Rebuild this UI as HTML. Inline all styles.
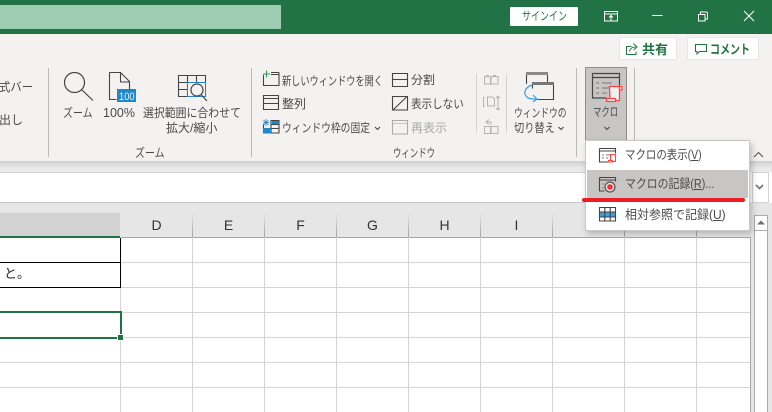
<!DOCTYPE html>
<html lang="ja"><head><meta charset="utf-8"><style>
html,body{margin:0;padding:0;width:772px;height:412px;overflow:hidden;background:#fff}
body{position:relative;font-family:"Liberation Sans","Noto Sans CJK JP",sans-serif;font-size:12px;color:#444}
.a{position:absolute}
.t{position:absolute;white-space:nowrap;line-height:16px;font-size:12px;color:#4a4a4a;transform-origin:0 0}
svg{position:absolute;overflow:visible}
.hd{position:absolute;top:213px;height:24px;line-height:24px;text-align:center;font-size:14px;color:#333;width:71px}
.v{position:absolute;top:237px;width:1px;height:175px;background:#d4d4d4}
.h{position:absolute;left:0;width:750px;height:1px;background:#d4d4d4}
.g{position:absolute;top:213px;width:1px;height:24px;background:linear-gradient(#e6e6e6,#9e9e9e)}
.sep{position:absolute;width:1px;background:#b9b9b9}
</style></head><body>
<div class="a" style="left:0;top:0;width:772px;height:34px;background:#217346"></div>
<div class="a" style="left:0;top:5px;width:281px;height:24px;background:#9fcdb3"></div>
<div class="a" style="left:510px;top:7px;width:68px;height:19px;background:#fff;border-radius:1px"></div>
<div class="t" style="left:522px;top:8px;color:#217346;transform:scaleX(.75)">サインイン</div>
<svg style="left:0;top:0" width="772" height="34" fill="none" stroke="#fff" stroke-width="1">
<path d="M604.500 11.500h13v9.500h-13zM604.500 14h13M611 21v-5M609 17.500l2-2 2 2"/>
<path d="M652 15.500h10.500"/>
<path d="M698.500 14.500h6.500v6.500h-6.500zM700.500 14v-2h5.500a1.500 1.500 0 0 1 1.500 1.500v5.500h-2.500"/>
<path d="M744 11l10 10M754 11l-10 10" stroke-width="1.100"/>
</svg>

<div class="a" style="left:0;top:34px;width:772px;height:127px;background:#f3f2f1"></div>
<div class="a" style="left:0;top:161px;width:772px;height:11px;background:linear-gradient(#cfcfcf,#e8e8e8 60%,#ececec)"></div>
<div class="a" style="left:619px;top:37px;width:58px;height:23px;background:#fff;border:1px solid #e6e6e6;border-radius:2px;box-sizing:border-box"></div>
<div class="a" style="left:687px;top:37px;width:72px;height:23px;background:#fff;border:1px solid #e6e6e6;border-radius:2px;box-sizing:border-box"></div>
<div class="t" style="left:642px;top:42px;color:#217346;font-weight:bold;font-size:13px">共有</div>
<div class="t" style="left:710px;top:42px;color:#217346;font-weight:bold;font-size:13px;transform:scaleX(.77)">コメント</div>
<svg style="left:0;top:0" width="772" height="70" fill="none" stroke="#217346">
<path d="M631.500 46.500h-5v8h9.500v-3M629.500 51.500c.5-3 3-4.500 6-4.500M633.500 43.500l3.500 3.500-3.500 3"/>
<path d="M695.500 44.500h11v7h-7l-2.500 2.500v-2.500h-1.500z"/>
</svg>

<!-- left fragments -->
<div class="t" style="left:-1px;top:79px;transform:scaleX(.95)">式バー</div>
<div class="t" style="left:-1px;top:112px">出し</div>
<div class="sep" style="left:48px;top:68px;height:89px"></div>
<div class="sep" style="left:251px;top:68px;height:89px"></div>
<div class="sep" style="left:476px;top:74px;height:59px;background:#d3d3d3"></div>
<div class="sep" style="left:506px;top:74px;height:59px;background:#d3d3d3"></div>
<div class="sep" style="left:576px;top:68px;height:89px"></div>
<div class="sep" style="left:634px;top:68px;height:89px"></div>

<!-- zoom group -->
<svg style="left:0;top:0" width="260" height="120" fill="none" stroke="#444" stroke-width="1">
<circle cx="74.500" cy="82.500" r="10" stroke-width="1.200"/><path d="M82 90l11 10.500" stroke-width="1.200"/>
<path d="M109.500 72.500h11l9 9v8M120.500 73v9h9M109.500 72.500v27h7" stroke-width="1.100"/>
<rect x="117" y="89" width="19" height="13" fill="#1d88cc" stroke="none"/>
<path d="M178.500 75.500h27v21h-27zM178.500 82.500h27M178.500 89.500h9M187.500 75.500v21M196.500 75.500v7" stroke-width="1.100"/>
<rect x="187.500" y="82.500" width="18" height="14" fill="#f3f2f1" stroke="#1d88cc"/>
<circle cx="197" cy="90" r="6" fill="#f3f2f1" stroke-width="1.200"/><path d="M201 94.500l6 6.500" stroke-width="1.200"/>
</svg>
<div class="t" style="left:119px;top:89px;color:#e6f3fb;font-size:11px;transform:scaleX(.85)">100</div>
<div class="t" style="left:63px;top:105px;transform:scaleX(.83)">ズーム</div>
<div class="t" style="left:103px;top:105px;font-size:12.500px">100%</div>
<div class="t" style="left:143px;top:105px;transform:scaleX(.907)">選択範囲に合わせて</div>
<div class="t" style="left:166px;top:120px">拡大/縮小</div>
<div class="t" style="left:135px;top:145px;transform:scaleX(.83)">ズーム</div>

<!-- window group -->
<svg style="left:0;top:0" width="772" height="170" fill="none" stroke="#444" stroke-width="1">
<path d="M263.500 75v10.500h15.500v-13M271 72.500h8M271 74.500h8" stroke-width="1.100"/><path d="M263 74h7M266.500 70.500v7" stroke="#2a9d4e"/>
<path d="M263.500 95.500h15v14h-15zM263.500 98.500h15M263.500 103.500h15" stroke-width="1.100"/>
<path d="M270.500 120.500h8.500v12.500h-15.500v-9M263.500 128.500h15.500M271 120.500v12.500M271 124.500h8" stroke-width="1.100"/>
<rect x="263" y="128" width="8" height="5.500" fill="#1d88cc" stroke="none"/><rect x="272" y="121" width="7" height="3" fill="#1d88cc" stroke="none"/><path d="M266 119v7M263 122.500h6.500M263.500 120l5 5M268.500 120l-5 5" stroke="#1d88cc" stroke-width=".8"/>
<path d="M392.500 73.500h15v13h-15zM392.500 79.500h15" stroke-width="1.100"/>
<path d="M392.500 96.500h15v13.500h-15zM393 110l14-13.500" stroke-width="1.100"/>
<path d="M392.500 120.500h15v13.500h-15z" stroke="#aaa" stroke-width="1.100"/><path d="M393 123.500h14" stroke="#c8c8c8"/>
<g stroke="#b4b4b4"><path d="M484.500 76.500v7.500h6v-7zM491 76.500h7v7.500h-7zM486 75.500h3M493 75.500h3"/>
<path d="M484.500 97.500h-1v9h1M487.500 97h5l2 2v7h-7zM498 96v14M496 98l2-2 2 2M496 108l2 2 2-2"/>
<path d="M484.500 126.500v7h6v-7zM491 126.500h7v7h-7zM489 119.500l-3 2.500 3 2.500M486 122h5v3"/></g>
<path d="M526.500 84v-11.500h21v10" stroke-width="1.100"/><rect x="526" y="72" width="22" height="3" fill="#8a8a8a" stroke="none"/>
<path d="M532.500 82.500h21v17h-16" stroke-width="1.100"/><path d="M532.500 82.500v6" stroke-width="1.100"/><rect x="532" y="82" width="22" height="3" fill="#777" stroke="none"/>
<path d="M532 85c-6 2-9 7-6 11 2 3 6 3 10 3M533 95l4 4-4 3" stroke="#3d9fdc" stroke-width="1.200"/>
<path d="M375 127l2.500 2.500 2.500-2.500M558.500 127l2.500 2.500 2.500-2.500" stroke-width="1"/>
</svg>
<div class="t" style="left:282px;top:73px;transform:scaleX(.765)">新しいウィンドウを開く</div>
<div class="t" style="left:282px;top:96px">整列</div>
<div class="t" style="left:282px;top:120px;transform:scaleX(.815)">ウィンドウ枠の固定</div>
<div class="t" style="left:411px;top:72px">分割</div>
<div class="t" style="left:411px;top:96px;transform:scaleX(.88)">表示しない</div>
<div class="t" style="left:411px;top:120px;color:#a9a9a9">再表示</div>
<div class="t" style="left:393px;top:145px;transform:scaleX(.7)">ウィンドウ</div>
<div class="t" style="left:514px;top:105px;transform:scaleX(.73)">ウィンドウの</div>
<div class="t" style="left:514px;top:120px;transform:scaleX(.85)">切り替え</div>

<!-- macro button -->
<div class="a" style="left:585px;top:67px;width:42px;height:74px;box-sizing:border-box;background:#c8c6c4;border:1px solid #8e8e8e;border-bottom:0"></div>
<svg style="left:0;top:0" width="772" height="150" fill="none" stroke="#444">
<path d="M592.500 73.500h27v12M592.500 73.500v24.500h14M593 77.500h26" stroke-width="1.200"/>
<path d="M596 83h3M602 83h10M596 88h3M602 88h7M596 93h3M602 93h5" stroke="#777"/>
<path d="M609.500 86.500h10v14h-9.500z" fill="#f1f1f1" stroke="#f44" stroke-width="1.300"/><path d="M619.500 86.500h2.500v3.500h-2.500z" fill="#f1f1f1" stroke="#f44" stroke-width="1.200"/><path d="M606.500 98.500h9v3h-9z" fill="#f1f1f1" stroke="#f44" stroke-width="1.300"/>
<path d="M604.500 127l2.500 2.500 2.500-2.500" stroke="#444"/>
</svg>
<div class="t" style="left:593px;top:104px;transform:scaleX(.7)">マクロ</div>

<!-- formula bar -->
<div class="a" style="left:0;top:172px;width:751px;height:31px;background:#fff;border-top:1px solid #cfcfcf;border-bottom:1px solid #c6c6c6;box-sizing:border-box"></div>
<div class="a" style="left:752px;top:172px;width:17px;height:31px;background:#fff;border:1px solid #d4d4d4;box-sizing:border-box"></div>
<div class="a" style="left:0;top:203px;width:772px;height:209px;background:#e6e6e6"></div>
<svg style="left:0;top:0" width="772" height="190" fill="none" stroke="#555" stroke-width="1.100">
<path d="M754 157l4.500-4.500 4.500 4.500"/><path d="M756 185l3.500 3.500 3.500-3.500" stroke-width="1.700" stroke="#777"/>
</svg>

<!-- grid -->
<div class="a" style="left:0;top:213px;width:120px;height:24px;background:#d2d2d2"></div>
<div class="a" style="left:0;top:237px;width:750px;height:175px;background:#fff"></div>
<div class="a" style="left:120px;top:237px;width:631px;height:1px;background:#a6a6a6"></div>
<div class="a" style="left:0;top:236px;width:120px;height:2px;background:#217346"></div>
<div class="hd" style="left:121px">D</div><div class="hd" style="left:193px">E</div><div class="hd" style="left:265px">F</div><div class="hd" style="left:337px">G</div><div class="hd" style="left:409px">H</div><div class="hd" style="left:481px">I</div>
<div class="g" style="left:192px"></div><div class="g" style="left:264px"></div><div class="g" style="left:336px"></div><div class="g" style="left:408px"></div><div class="g" style="left:480px"></div><div class="g" style="left:552px"></div><div class="g" style="left:624px"></div><div class="g" style="left:696px"></div>
<div class="v" style="left:120px"></div><div class="v" style="left:192px"></div><div class="v" style="left:264px"></div><div class="v" style="left:336px"></div><div class="v" style="left:408px"></div><div class="v" style="left:480px"></div><div class="v" style="left:552px"></div><div class="v" style="left:624px"></div><div class="v" style="left:696px"></div>
<div class="h" style="top:262px"></div><div class="h" style="top:287px"></div><div class="h" style="top:312px"></div><div class="h" style="top:337px"></div><div class="h" style="top:362px"></div><div class="h" style="top:387px"></div>
<div class="a" style="left:750px;top:237px;width:1px;height:175px;background:#a6a6a6"></div>
<div class="a" style="left:0;top:262px;width:120px;height:1px;background:#000"></div>
<div class="a" style="left:0;top:287px;width:121px;height:1px;background:#000"></div>
<div class="a" style="left:120px;top:238px;width:1px;height:50px;background:#000"></div>
<div class="t" style="left:4px;top:266px;color:#222;font-size:13px">と。</div>
<div class="a" style="left:0;top:311px;width:122px;height:2px;background:#217346"></div>
<div class="a" style="left:0;top:337px;width:118px;height:2px;background:#217346"></div>
<div class="a" style="left:120px;top:311px;width:2px;height:24px;background:#217346"></div>
<div class="a" style="left:118px;top:335px;width:5px;height:5px;background:#217346;outline:1px solid #fff"></div>

<!-- scrollbar -->
<div class="a" style="left:754px;top:215px;width:14px;height:197px;background:#fff;border:1px solid #ababab;border-bottom:0;box-sizing:border-box"></div>
<div class="a" style="left:755px;top:216px;width:12px;height:14px;background:#fff;border-bottom:1px solid #ababab"></div>
<svg style="left:0;top:0" width="772" height="240"><path d="M757 224.500l4-4 4 4z" fill="#707070"/></svg>

<!-- dropdown -->
<div class="a" style="left:585px;top:140px;width:165px;height:91px;background:#fff;border:1px solid #c8c8c8;box-sizing:border-box;box-shadow:2px 3px 6px rgba(0,0,0,.22)"></div>
<div class="a" style="left:587px;top:170px;width:161px;height:28px;background:#c8c6c4"></div>
<div class="a" style="left:582px;top:198px;width:163px;height:4px;background:#ee1c25;border-radius:2px"></div>
<svg style="left:0;top:0" width="772" height="240" fill="none" stroke="#444">
<path d="M599.500 148.500h16v5M599.500 148.500v13.500h9M600 151h15" stroke-width="1.100"/>
<path d="M602 155h2M606 155h4M602 158h2M606 158h2" stroke="#777"/>
<path d="M610.500 154.500h5v7h-5z" fill="#fff" stroke="#f44" stroke-width="1.100"/><path d="M608.500 160.500h4v1.500h-4z" fill="#fff" stroke="#f44"/>
<path d="M599.500 177.500h16v4M599.500 177.500v13.500h5M600 180h15" stroke-width="1.100"/>
<path d="M602 184h2M602 188h2" stroke="#777"/>
<circle cx="610" cy="187" r="5" fill="#ddd" stroke="#555" stroke-width="1.200"/><circle cx="610" cy="187" r="2.800" fill="#f0323c" stroke="none"/>
<rect x="600" y="212" width="15" height="5" fill="#3d9fdc" stroke="none"/>
<path d="M599.500 207.500h16v13.500h-16zM599.500 212h16M599.500 217h16M604.800 207.500v13.500M610.200 207.500v13.500" stroke-width="1.100"/>
</svg>
<div class="t" style="left:625px;top:147px;font-size:12.500px;transform:scaleX(.835)">マクロの表示(<u>V</u>)</div>
<div class="t" style="left:625px;top:176px;font-size:12.500px;transform:scaleX(.87)">マクロの記録(<u>R</u>)...</div>
<div class="t" style="left:625px;top:207px;font-size:12.500px;transform:scaleX(.96)">相対参照で記録(<u>U</u>)</div>
</body></html>
